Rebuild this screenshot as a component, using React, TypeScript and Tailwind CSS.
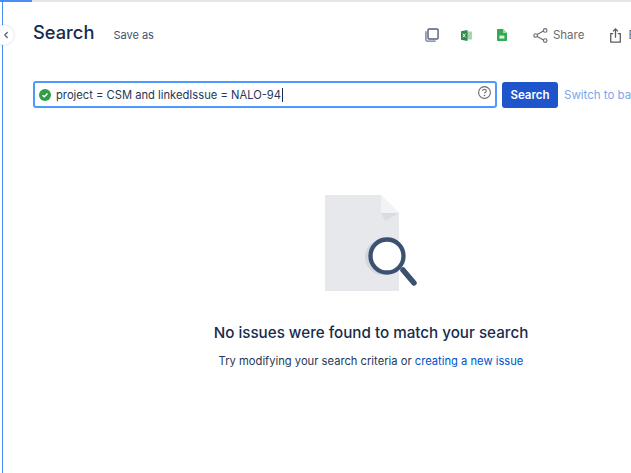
import { ChevronLeft } from "lucide-react";

function CopyIcon() {
  return (
    <svg width="14" height="14" viewBox="0 0 15 15" fill="none">
      <path d="M1 3.5v9.2c0 .7.5 1.3 1.3 1.3h9.2" stroke="#6b778c" strokeWidth="1.4" />
      <rect x="3.2" y="1" width="10.8" height="10.8" rx="1.2" fill="#fff" stroke="#505f79" strokeWidth="1.5" />
    </svg>
  );
}

function ExcelIcon() {
  return (
    <svg width="11" height="11" viewBox="0 0 11 11">
      <rect x="4" y="1.5" width="7" height="8" fill="#a5d6b0" />
      <path d="M0 1.2 6.5 0v11L0 9.8z" fill="#2e8b47" />
      <path d="M1.8 3.6 4.5 7.4M4.5 3.6 1.8 7.4" stroke="#fff" strokeWidth="0.9" />
    </svg>
  );
}

function SheetIcon() {
  return (
    <svg width="10" height="12" viewBox="0 0 10 12">
      <path d="M0 1c0-.6.4-1 1-1h5l4 4v7c0 .6-.4 1-1 1H1c-.6 0-1-.4-1-1z" fill="#34a853" />
      <path d="M6 0l4 4H6z" fill="#a8dab5" />
      <rect x="2.4" y="6.6" width="5" height="3" fill="#d8f0de" />
    </svg>
  );
}

function ShareIcon() {
  return (
    <svg width="15" height="15" viewBox="0 0 16 16" fill="none" stroke="#6b6b6b" strokeWidth="1.2">
      <path d="M4 7.2 11.6 3M4 8.8l7.6 4.2" />
      <circle cx="2.8" cy="8" r="1.9" fill="#fff" />
      <circle cx="13" cy="2.6" r="1.9" fill="#fff" />
      <circle cx="13" cy="13.4" r="1.9" fill="#fff" />
    </svg>
  );
}

function ExportIcon() {
  return (
    <svg width="11" height="15" viewBox="0 0 12 16" fill="none" stroke="#5c5c5c" strokeWidth="1.4">
      <path d="M3.5 6H.8v9.2h10.4V6H8.500" />
      <path d="M6 10.500V1M3.300 3.500 6 .9l2.700 2.600" />
    </svg>
  );
}

function EmptyIllustration() {
  return (
    <svg width="92" height="96" viewBox="0 0 92 96" fill="none">
      <path d="M0 0h56l18 18v78H0z" fill="#e6e8ec" />
      <path d="M56 0l18 18H56z" fill="#f2f3f6" />
      <path d="M56 18h18l-14 8z" fill="#d9dce3" />
      <circle cx="58" cy="62" r="18" fill="#d3d6dd" />
      <circle cx="62" cy="61" r="16.500" fill="#fff" stroke="#3b5170" strokeWidth="4.300" />
      <path d="M78 75l11 13" stroke="#3b5170" strokeWidth="5.500" strokeLinecap="round" />
    </svg>
  );
}

export default function App() {
  return (
    <div className="relative h-[473px] w-[631px] overflow-hidden bg-white font-['Inter','Liberation_Sans',sans-serif]">
      <div className="h-[2px] w-full bg-[#e4e6ea]">
        <div className="h-[2px] w-[32px] bg-[#4c8cf5]" />
      </div>

      <div className="absolute bottom-0 left-[2px] top-0 w-px bg-[#4c8cf5]" />
      <div className="absolute left-[-6px] top-[25px] flex h-[20px] w-[20px] items-center justify-center rounded-full bg-white pl-[3px] shadow-[0_0_2px_rgba(9,30,66,0.25)]">
        <ChevronLeft size={10} strokeWidth={3} color="#505f79" />
      </div>

      {/* the real page runs wider than the window, so it gets cut off on the right */}
      <div className="w-[742px]">
        <div className="pl-[33px]">
          <div className="flex h-[60px] items-center whitespace-nowrap">
            <h1 className="text-[18.300px] font-medium leading-6 text-[#172b4d]">Search</h1>
            <span className="ml-[19px] mt-[6px] text-[11px] text-[#42526e]">Save as</span>
            <div className="ml-[271px] mt-[6px] flex items-center">
              <CopyIcon />
              <span className="ml-[22px]"><ExcelIcon /></span>
              <span className="ml-[25px]"><SheetIcon /></span>
              <span className="ml-[26px]"><ShareIcon /></span>
              <span className="ml-[5px] mt-[1px] text-[11.500px] text-[#6b6b6b]">Share</span>
              <span className="ml-[26px]"><ExportIcon /></span>
              <span className="ml-[7px] mt-[1px] text-[11.500px] text-[#6b6b6b]">Export</span>
            </div>
          </div>

          <div className="mt-[19px] flex items-start whitespace-nowrap">
            <div className="flex h-[27px] w-[464px] shrink-0 items-center rounded-[3px] border-2 border-[#4c9aff] pl-[4px] pr-[3px]">
              <span className="flex h-[12px] w-[12px] items-center justify-center rounded-full bg-[#2f9e44]">
                <svg width="8" height="8" viewBox="0 0 8 8" fill="none">
                  <path d="M1.500 4.200 3.300 5.800 6.500 2.400" stroke="#fff" strokeWidth="1.400" />
                </svg>
              </span>
              <span className="ml-[5px] border-r border-[#172b4d] pr-px text-[11.200px] leading-[14px] text-[#253858]">
                project = CSM and linkedIssue = NALO-94
              </span>
              <svg className="mb-[4px] ml-auto" width="15" height="15" viewBox="0 0 15 15" fill="none">
                <circle cx="7.500" cy="7.500" r="5.900" stroke="#6b6b6b" strokeWidth="1.100" />
                <path d="M5.700 6c0-1 .8-1.700 1.800-1.700s1.800.6 1.800 1.600c0 1.300-1.800 1.300-1.800 2.700" stroke="#6b6b6b" strokeWidth="1.100" />
                <circle cx="7.500" cy="10.500" r=".8" fill="#6b6b6b" />
              </svg>
            </div>
            <button className="ml-[5px] mt-[1px] h-[26px] w-[56px] shrink-0 rounded-[3px] bg-[#1f55cc] pt-[1px] text-[11.500px] font-semibold text-white">
              Search
            </button>
            <a className="ml-[6px] mt-[7px] text-[11.500px] leading-[14px] text-[#7aa7ea]">Switch to basic</a>
          </div>
        </div>

        <div className="mt-[87px] flex flex-col items-center">
          <EmptyIllustration />
          <h2 className="mt-[32px] text-[15.200px] font-medium leading-5 text-[#172b4d]">
            No issues were found to match your search
          </h2>
          <p className="mt-[10px] text-[11.200px] leading-4 text-[#253858]">
            Try modifying your search criteria or <a className="text-[#0052cc]">creating a new issue</a>
          </p>
        </div>
      </div>
    </div>
  );
}
